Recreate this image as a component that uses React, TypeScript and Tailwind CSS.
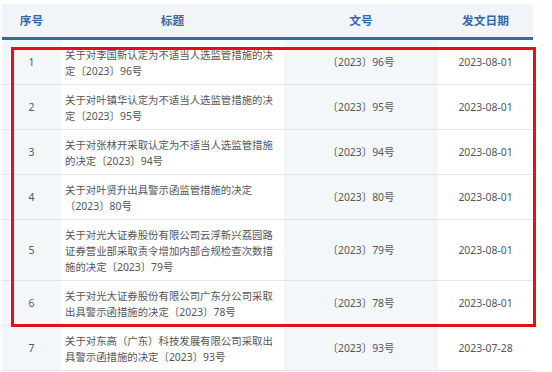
const rows = [
  { no: '1', title: ['关于对李国新认定为不适当人选监管措施的决', '定〔2023〕96号'], doc: '〔2023〕96号', date: '2023-08-01' },
  { no: '2', title: ['关于对叶镇华认定为不适当人选监管措施的决', '定〔2023〕95号'], doc: '〔2023〕95号', date: '2023-08-01' },
  { no: '3', title: ['关于对张林开采取认定为不适当人选监管措施', '的决定〔2023〕94号'], doc: '〔2023〕94号', date: '2023-08-01' },
  { no: '4', title: ['关于对叶贤升出具警示函监管措施的决定', '〔2023〕80号'], doc: '〔2023〕80号', date: '2023-08-01' },
  {
    no: '5',
    title: ['关于对光大证券股份有限公司云浮新兴荔园路', '证券营业部采取责令增加内部合规检查次数措', '施的决定〔2023〕79号'],
    doc: '〔2023〕79号',
    date: '2023-08-01',
  },
  { no: '6', title: ['关于对光大证券股份有限公司广东分公司采取', '出具警示函措施的决定〔2023〕78号'], doc: '〔2023〕78号', date: '2023-08-01' },
  { no: '7', title: ['关于对东高（广东）科技发展有限公司采取出', '具警示函措施的决定〔2023〕93号'], doc: '〔2023〕93号', date: '2023-07-28' },
]

const font = { fontFamily: '"Noto Sans", "Noto Sans CJK SC", sans-serif' }

export default function App() {
  return (
    <div className="relative w-[552px] h-[372px] bg-white overflow-hidden" style={font}>
      <div className="ml-[2px] mt-[4px] w-[531px]">
        <div className="flex h-[33px] items-center bg-[#f1f5f9] text-[11.7px] font-bold text-[#3a68a3]">
          <div className="w-[59px] text-center">序号</div>
          <div className="w-[223px] text-center">标题</div>
          <div className="w-[154px] text-center">文号</div>
          <div className="w-[95px] text-center">发文日期</div>
        </div>
        <div className="h-[3px] bg-[#2d6aa8]" />
        {rows.map((r) => (
          <div key={r.no} className="flex border-b border-[#e2e5e9] text-[10.4px] leading-[16px] text-[#555]">
            <div className="w-[59px] flex items-center justify-center bg-[#f4f7fa]">{r.no}</div>
            <div className="w-[223px] pl-[4px] pt-[7px] pb-[5px] whitespace-nowrap">
              {r.title.map((t, i) => (
                <div key={i} className="h-[16px]">{t}</div>
              ))}
            </div>
            <div className="w-[154px] flex items-center justify-center bg-[#f4f7fa]">{r.doc}</div>
            <div className="w-[95px] flex items-center justify-center">{r.date}</div>
          </div>
        ))}
      </div>
      <div className="absolute left-[11px] top-[47px] w-[525px] h-[280px] border-[3px] border-[#e3101c]" />
    </div>
  )
}
